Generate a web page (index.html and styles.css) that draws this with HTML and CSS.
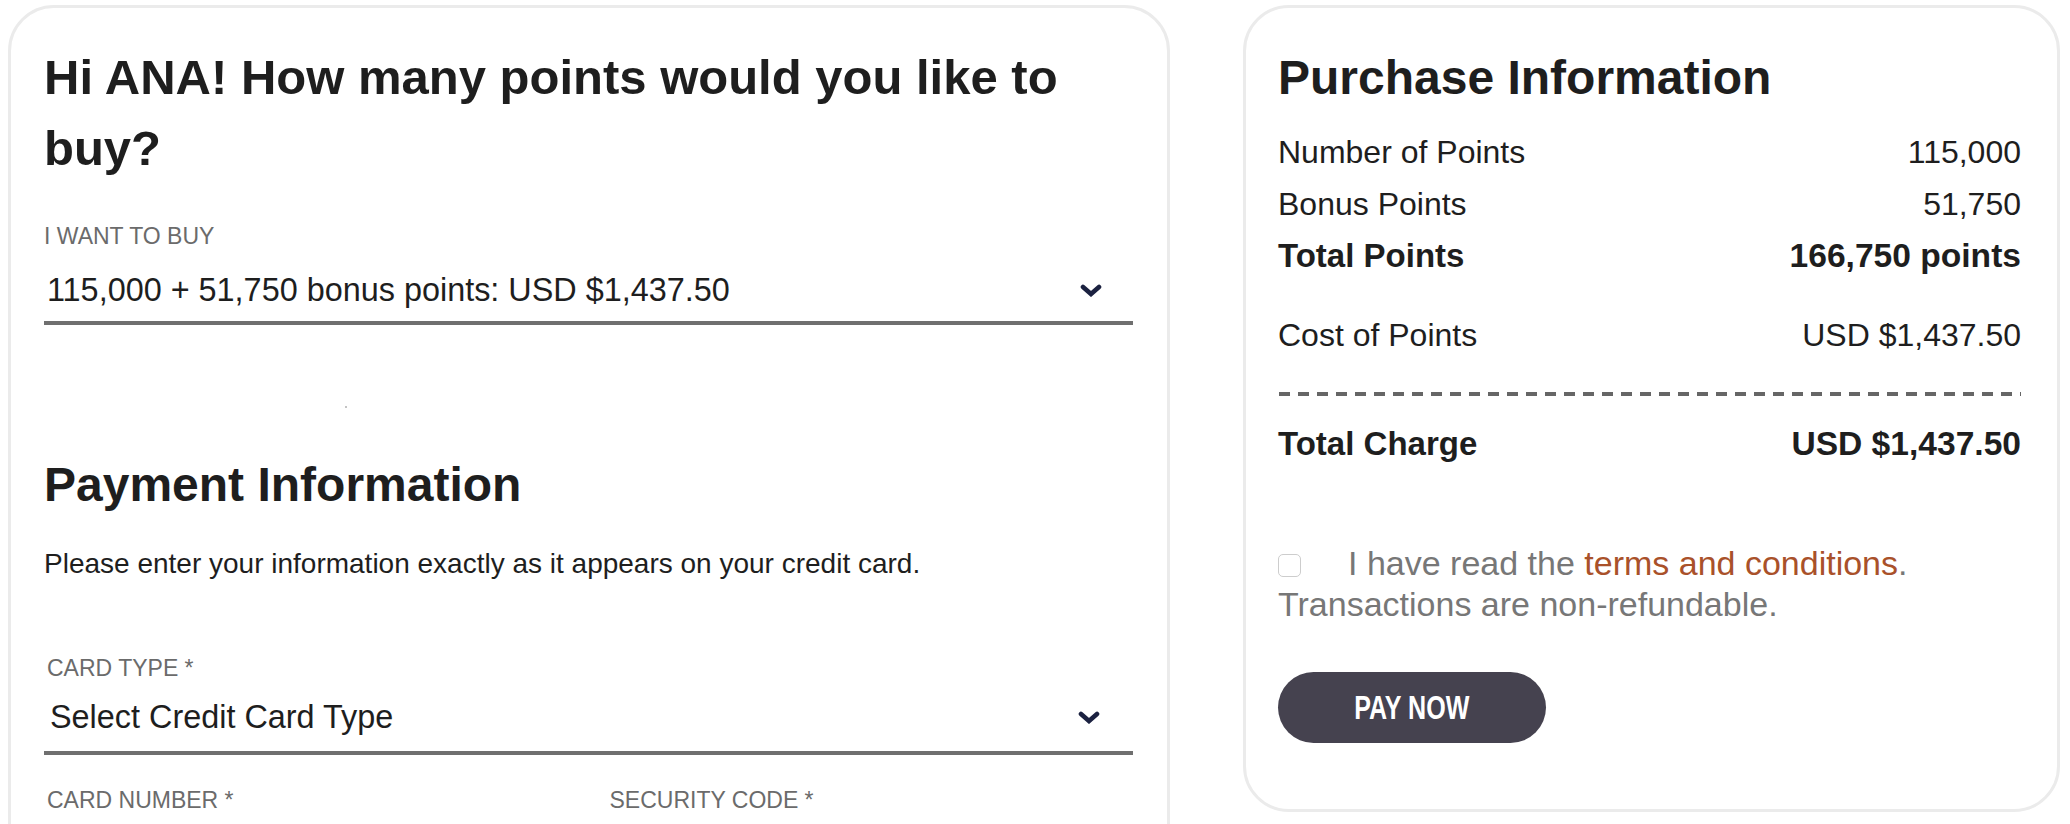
FILE: index.html
```html
<!DOCTYPE html>
<html lang="en">
<head>
    <meta charset="UTF-8">
    <title>Buy Points</title>
    <link rel="stylesheet" href="styles.css">
</head>
<body>
    <div class="page">

        <!-- BUY FORM -->
        <section class="card card-buy">
            <h1 class="title title-lg">Hi ANA! How many points would you like to buy?</h1>

            <div class="field">
                <label class="field-label">I WANT TO BUY</label>
                <div class="select">
                    <span class="select-value">115,000 + 51,750 bonus points: USD $1,437.50</span>
                    <svg class="chevron" viewBox="0 0 22 13" width="22" height="13">
                        <path d="M3 3 L11 10 L19 3" />
                    </svg>
                </div>
            </div>

            <div class="loader"><span class="loader-dot"></span></div>

            <h2 class="title">Payment Information</h2>
            <p class="hint">Please enter your information exactly as it appears on your credit card.</p>

            <div class="field field-inset field-type">
                <label class="field-label">CARD TYPE *</label>
                <div class="select">
                    <span class="select-value">Select Credit Card Type</span>
                    <svg class="chevron" viewBox="0 0 22 13" width="22" height="13">
                        <path d="M3 3 L11 10 L19 3" />
                    </svg>
                </div>
            </div>

            <div class="field-row">
                <div class="field field-inset">
                    <label class="field-label">CARD NUMBER *</label>
                    <div class="input"></div>
                </div>
                <div class="field field-inset">
                    <label class="field-label">SECURITY CODE *</label>
                    <div class="input"></div>
                </div>
            </div>
        </section>

        <!-- SUMMARY -->
        <aside class="card card-summary">
            <h2 class="title">Purchase Information</h2>

            <div class="summary">
                <div class="summary-row">
                    <span>Number of Points</span>
                    <span>115,000</span>
                </div>
                <div class="summary-row">
                    <span>Bonus Points</span>
                    <span>51,750</span>
                </div>
                <div class="summary-row strong">
                    <span>Total Points</span>
                    <span class="amount">166,750 points</span>
                </div>
                <div class="summary-row cost">
                    <span>Cost of Points</span>
                    <span>USD $1,437.50</span>
                </div>
            </div>

            <div class="dashed"></div>

            <div class="summary-row strong total">
                <span>Total Charge</span>
                <span class="amount">USD $1,437.50</span>
            </div>

            <p class="terms">
                <input type="checkbox" class="checkbox">I have read the <a href="#">terms and conditions</a>. Transactions are non-refundable.
            </p>

            <button type="button" class="pay-btn"><span>PAY NOW</span></button>
        </aside>
    </div>
</body>
</html>
```

FILE: styles.css
```css
:root {
    --text: #1e1e1e;
    --muted: #6b6b6b;
    --border: #ebebeb;
    --line: #6f6f6f;
    --link: #a9512a;
    --button: #45424f;
    --chevron: #1b2140;
}

* {
    box-sizing: border-box;
    margin: 0;
    padding: 0;
}

html, body {
    overflow: hidden;
}

body {
    font-family: 'Liberation Sans', Arial, sans-serif;
    color: var(--text);
    background: #fff;
}

.page {
    display: flex;
    align-items: flex-start;
    gap: 73px;
    padding: 5px 0 0 8px;
}

.card {
    border: 3px solid var(--border);
    border-radius: 46px;
    background: #fff;
}

.card-buy {
    width: 1162px;
    padding: 34px 34px 120px 33px;
}

.card-summary {
    width: 817px;
    height: 807px;
    padding: 34px 36px 0 32px;
}

.title {
    font-size: 48px;
    line-height: 71px;
    font-weight: 700;
}

.title-lg {
    font-size: 49px;
}

/* form fields */
.field {
    margin-top: 38px;
}

.field-label {
    display: block;
    font-size: 23px;
    line-height: 28px;
    color: var(--muted);
}

.select {
    display: flex;
    align-items: center;
    justify-content: space-between;
    margin-top: 20px;
    padding: 0 31px 11px 3px;
    border-bottom: 4px solid var(--line);
}

.select-value {
    font-size: 32.4px;
    line-height: 40px;
}

.chevron {
    fill: none;
    stroke: var(--chevron);
    stroke-width: 4.6;
    stroke-linecap: round;
}

.field-inset .field-label {
    padding-left: 3px;
}

.field-inset .select {
    padding-left: 6px;
    padding-right: 33px;
}

.field-type {
    margin-top: 73px;
}

.field-type .select {
    margin-top: 15px;
    padding-bottom: 14px;
}

.field-row {
    display: grid;
    grid-template-columns: 1fr 1fr;
    gap: 36px;
    margin-top: 31px;
}

.field-row .field {
    margin-top: 0;
}

.input {
    height: 58px;
    border-bottom: 4px solid var(--line);
}

.loader {
    height: 124px;
    padding: 81px 0 0 301px;
}

.loader-dot {
    display: block;
    width: 2px;
    height: 2px;
    background: #c4c4c4;
}

.hint {
    margin-top: 27px;
    font-size: 28px;
    line-height: 34px;
}

/* summary */
.summary {
    margin-top: 13px;
}

.summary-row {
    display: flex;
    justify-content: space-between;
    font-size: 32px;
    line-height: 52px;
}

.summary-row.strong {
    font-size: 33px;
    font-weight: 700;
}

.summary-row .amount {
    font-size: 33.6px;
}

.summary-row.cost {
    margin-top: 27px;
}

.dashed {
    height: 4px;
    margin-top: 31px;
    margin-left: 1px;
    background: repeating-linear-gradient(90deg, #666 0 11px, transparent 11px 19px);
}

.summary-row.total {
    margin-top: 22px;
}

.terms {
    margin-top: 73px;
    font-size: 34px;
    line-height: 41px;
    color: #777;
}

.terms a {
    color: var(--link);
    text-decoration: none;
}

.checkbox {
    appearance: none;
    -webkit-appearance: none;
    display: inline-block;
    width: 23px;
    height: 23px;
    margin-right: 47px;
    vertical-align: -2px;
    border: 1px solid #cdcdcd;
    border-radius: 5px;
    background: #fff;
}

.pay-btn {
    display: block;
    width: 268px;
    height: 71px;
    margin-top: 47px;
    border: none;
    border-radius: 36px;
    background: var(--button);
    color: #fff;
    font-family: 'Liberation Sans', Arial, sans-serif;
    font-weight: 700;
    font-size: 33px;
    cursor: pointer;
}

.pay-btn span {
    display: inline-block;
    transform: scaleX(0.76);
}
```
